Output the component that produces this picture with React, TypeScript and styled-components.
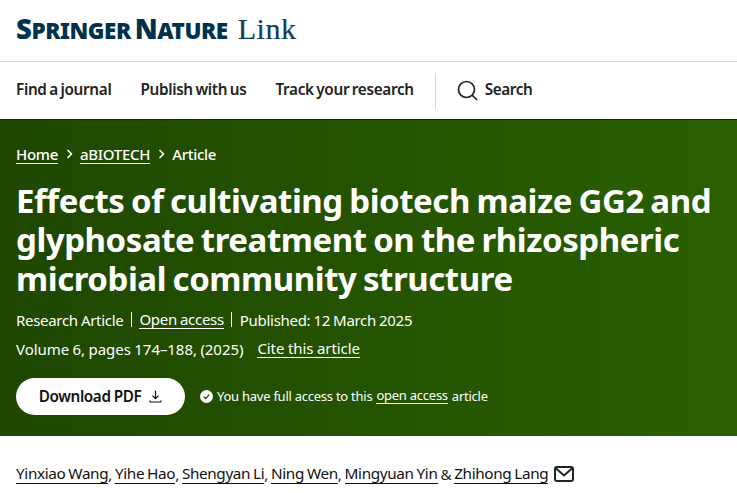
import React from "react";
import styled, { createGlobalStyle } from "styled-components";

const Global = createGlobalStyle`
  html, body { margin: 0; padding: 0; background: #fff; overflow: hidden; }
  body { font-family: "Noto Sans", "Open Sans", sans-serif; color: #222; }
  * { box-sizing: border-box; }
`;

const Page = styled.div`
  width: 737px;
  height: 493px;
  overflow: hidden;
`;

const LogoBar = styled.header`
  height: 62px;
  padding: 0 16px;
  display: flex;
  align-items: center;
  border-bottom: 1px solid #c9dcec;
`;

const Brand = styled.div`
  display: flex;
  align-items: baseline;
  color: #01324b;
  margin-top: -4px;
`;

const BrandBig = styled.span<{ $gap?: number }>`
  font-weight: 900;
  font-size: 27.5px;
  line-height: 1;
  letter-spacing: -0.4px;
  margin-left: ${(p) => p.$gap ?? 0}px;
`;

const BrandSmall = styled.span`
  font-weight: 900;
  font-size: 22.5px;
  line-height: 1;
  letter-spacing: -0.45px;
`;

const BrandLink = styled.span`
  font-family: "Liberation Serif", serif;
  font-size: 30px;
  line-height: 1;
  color: #0f3f5c;
  margin-left: 10px;
  letter-spacing: 0.6px;
  -webkit-text-stroke: 0.2px #0f3f5c;
`;

const NavBar = styled.nav`
  height: 57px;
  padding: 0 16px;
  display: flex;
  align-items: center;
`;

const NavItem = styled.a`
  font-size: 15.3px;
  font-weight: 600;
  letter-spacing: -0.33px;
  word-spacing: -1px;
  color: #222;
  margin-right: 29px;
  white-space: nowrap;
  margin-top: -4px;
`;

const NavDivider = styled.span`
  width: 1px;
  height: 36px;
  background: #c9dcec;
  margin-right: 21px;
  margin-left: -8px;
`;

const SearchBox = styled.div`
  display: flex;
  align-items: center;
  gap: 7px;
  font-size: 15.3px;
  font-weight: 600;
  letter-spacing: -0.4px;
  color: #222;
`;

const SearchLabel = styled.span`
  margin-top: -4px;
`;

const Hero = styled.section`
  height: 317px;
  padding: 24px 16px 0;
  background: linear-gradient(90deg, #1f4700 0%, #2a6000 100%);
  border-top: 1px solid #0b2a17;
  color: #fff;
`;

const Crumbs = styled.div`
  display: flex;
  align-items: center;
  font-size: 15px;
  line-height: 20px;
  font-weight: 500;
  letter-spacing: -0.3px;
`;

const CrumbLink = styled.a`
  border-bottom: 1px solid #fff;
  line-height: 18px;
`;

const CrumbSep = styled.svg`
  width: 7px;
  height: 10px;
  margin: 0 7px 0 8px;
`;

const Title = styled.h1`
  margin: 16.5px 0 0;
  font-size: 33px;
  line-height: 39px;
  font-weight: 700;
  letter-spacing: -0.45px;
  word-spacing: -1.6px;
  color: #fff;
  white-space: nowrap;
`;

const MetaRow = styled.div`
  display: flex;
  align-items: center;
  font-size: 15px;
  line-height: 20px;
  white-space: nowrap;
`;

const FirstMeta = styled(MetaRow)`
  margin-top: 12px;
  letter-spacing: -0.3px;
  word-spacing: -0.5px;
`;

const SecondMeta = styled(MetaRow)`
  margin-top: 9px;
  letter-spacing: -0.06px;
  word-spacing: -0.3px;
`;

const MetaLink = styled.a`
  border-bottom: 1px solid #fff;
  line-height: 18px;
`;

const Bar = styled.span`
  width: 1px;
  height: 15px;
  background: #fff;
  margin: 0 7.5px;
`;

const CiteLink = styled(MetaLink)`
  margin-left: 14px;
`;

const ActionRow = styled.div`
  display: flex;
  align-items: center;
  margin-top: 19px;
`;

const DownloadButton = styled.a`
  width: 169px;
  height: 37px;
  border-radius: 19px;
  background: #fff;
  display: flex;
  align-items: center;
  justify-content: center;
  gap: 8px;
  font-size: 15.3px;
  font-weight: 600;
  letter-spacing: -0.4px;
  word-spacing: -0.5px;
  color: #111;
`;

const AccessNote = styled.div`
  display: flex;
  align-items: center;
  margin-left: 15px;
  font-size: 13px;
  letter-spacing: -0.25px;
  white-space: nowrap;
`;

const AccessIcon = styled.svg`
  width: 13px;
  height: 13px;
  margin-right: 4px;
`;

const AccessLink = styled.a`
  border-bottom: 1px solid #fff;
  line-height: 15px;
  margin: 0 4px;
`;

const Authors = styled.div`
  height: 57px;
  padding: 28px 16px 0;
  display: flex;
  align-items: flex-start;
  font-size: 15.3px;
  line-height: 20px;
  letter-spacing: -0.36px;
  word-spacing: -0.7px;
  color: #222;
  white-space: pre;
`;

const Author = styled.a`
  color: #111;
  border-bottom: 1px solid #111;
  line-height: 19px;
`;

const Mail = styled.svg`
  width: 20px;
  height: 16px;
  margin: 2px 0 0 6px;
`;

export default function App() {
  return (
    <Page>
      <Global />
      <LogoBar>
        <Brand>
          <BrandBig>S</BrandBig><BrandSmall>PRINGER</BrandSmall>
          <BrandBig $gap={4}>N</BrandBig><BrandSmall>ATURE</BrandSmall>
          <BrandLink>Link</BrandLink>
        </Brand>
      </LogoBar>
      <NavBar>
        <NavItem>Find a journal</NavItem>
        <NavItem>Publish with us</NavItem>
        <NavItem>Track your research</NavItem>
        <NavDivider />
        <SearchBox>
          <svg width="21" height="21" viewBox="0 0 21 21" fill="none" stroke="#222" strokeWidth="1.7">
            <circle cx="9.5" cy="9.5" r="8" />
            <path d="M15.5 15.5 L19.5 19.5" strokeLinecap="round" />
          </svg>
          <SearchLabel>Search</SearchLabel>
        </SearchBox>
      </NavBar>
      <Hero>
        <Crumbs>
          <CrumbLink>Home</CrumbLink>
          <CrumbSep viewBox="0 0 7 10" fill="none" stroke="#fff" strokeWidth="1.5"><path d="M1.5 1 L5.5 5 L1.5 9" /></CrumbSep>
          <CrumbLink>aBIOTECH</CrumbLink>
          <CrumbSep viewBox="0 0 7 10" fill="none" stroke="#fff" strokeWidth="1.5"><path d="M1.5 1 L5.5 5 L1.5 9" /></CrumbSep>
          <span>Article</span>
        </Crumbs>
        <Title>
          Effects of cultivating biotech maize GG2 and<br />
          glyphosate treatment on the rhizospheric<br />
          microbial community structure
        </Title>
        <FirstMeta>
          <span>Research Article</span><Bar />
          <MetaLink>Open access</MetaLink><Bar />
          <span>Published: 12 March 2025</span>
        </FirstMeta>
        <SecondMeta>
          <span>Volume 6, pages 174–188, (2025)</span>
          <CiteLink>Cite this article</CiteLink>
        </SecondMeta>
        <ActionRow>
          <DownloadButton>
            Download PDF
            <svg width="13" height="13" viewBox="0 0 13 13" fill="none" stroke="#111" strokeWidth="1.2">
              <path d="M6.5 0.5 V8.5 M3.5 5.6 L6.5 8.6 L9.5 5.6 M1 10.5 V11.4 Q1 12 1.6 12 H11.4 Q12 12 12 11.4 V10.5" />
            </svg>
          </DownloadButton>
          <AccessNote>
            <AccessIcon viewBox="0 0 13 13">
              <circle cx="6.5" cy="6.5" r="6.5" fill="#fff" />
              <path d="M3.8 6.8 L5.7 8.6 L9.2 4.6" fill="none" stroke="#1f4700" strokeWidth="1.4" />
            </AccessIcon>
            You have full access to this<AccessLink>open access</AccessLink>article
          </AccessNote>
        </ActionRow>
      </Hero>
      <Authors>
        <Author>Yinxiao Wang</Author>, <Author>Yihe Hao</Author>, <Author>Shengyan Li</Author>, <Author>Ning Wen</Author>, <Author>Mingyuan Yin</Author> &amp; <Author>Zhihong Lang</Author>
        <Mail viewBox="0 0 20 16" fill="none" stroke="#222" strokeWidth="2">
          <rect x="1" y="1" width="18" height="14" rx="2" />
          <path d="M1.5 2 L10 9.5 L18.5 2" />
        </Mail>
      </Authors>
    </Page>
  );
}
